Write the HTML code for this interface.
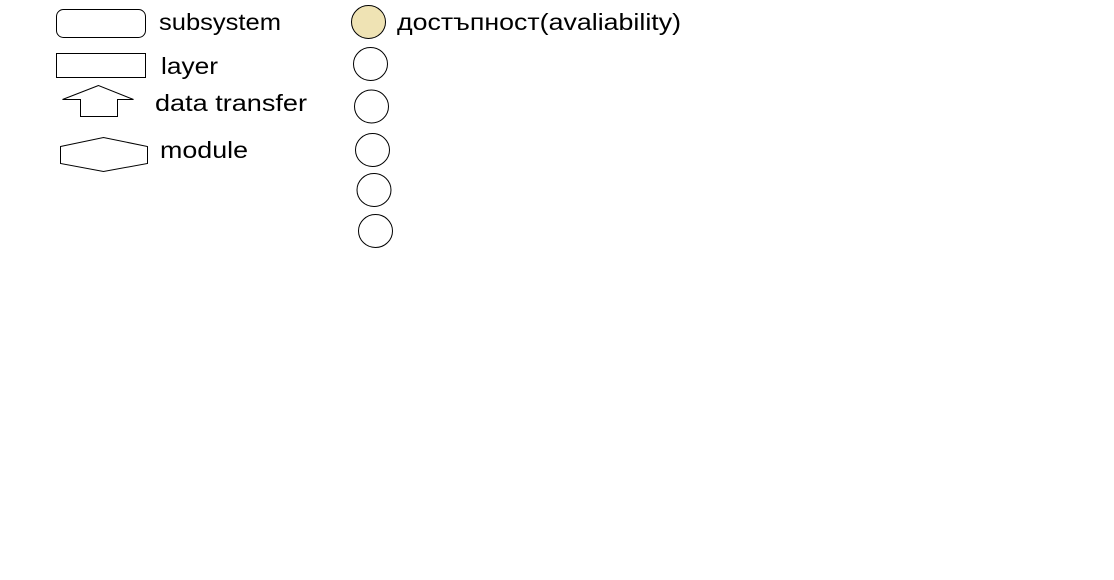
<!DOCTYPE html>
<html><head><style>html,body{margin:0;padding:0;background:#fff;}</style></head>
<body>
<svg width="1114" height="580" xmlns="http://www.w3.org/2000/svg" style="display:block">
<g fill="none" stroke="#000" stroke-width="1">
<rect x="56.5" y="9.5" width="89" height="28" rx="7" ry="7" fill="#fff"/>
<rect x="56.5" y="53.5" width="89" height="24" fill="#fff"/>
<polygon points="98.5,85.5 62.5,99.5 80.5,99.5 80.5,116.5 117.5,116.5 117.5,99.5 133.5,99.5" fill="#fff"/>
<polygon points="60.5,146.5 103.5,137.5 147.5,146.5 147.5,163.5 103.5,171.5 60.5,163.5" fill="#fff"/>
<ellipse cx="368.5" cy="22" rx="17" ry="16.5" fill="#efe3b4"/>
<ellipse cx="370.5" cy="64" rx="17" ry="16.5"/>
<ellipse cx="371.5" cy="106.5" rx="17" ry="16.5"/>
<ellipse cx="372.5" cy="150" rx="17" ry="16.5"/>
<ellipse cx="374" cy="190" rx="17" ry="16.5"/>
<ellipse cx="375.5" cy="231" rx="17" ry="16.5"/>
</g>
<g font-family="Liberation Sans, sans-serif" font-size="23" fill="#000">
<text x="159" y="30" textLength="122" lengthAdjust="spacingAndGlyphs">subsystem</text>
<text x="161" y="74" textLength="57" lengthAdjust="spacingAndGlyphs">layer</text>
<text x="155" y="111" textLength="152" lengthAdjust="spacingAndGlyphs">data transfer</text>
<text x="160" y="158" textLength="88" lengthAdjust="spacingAndGlyphs">module</text>
<text x="397" y="30" textLength="284" lengthAdjust="spacingAndGlyphs">достъпност(avaliability)</text>
</g>
</svg>
</body></html>
